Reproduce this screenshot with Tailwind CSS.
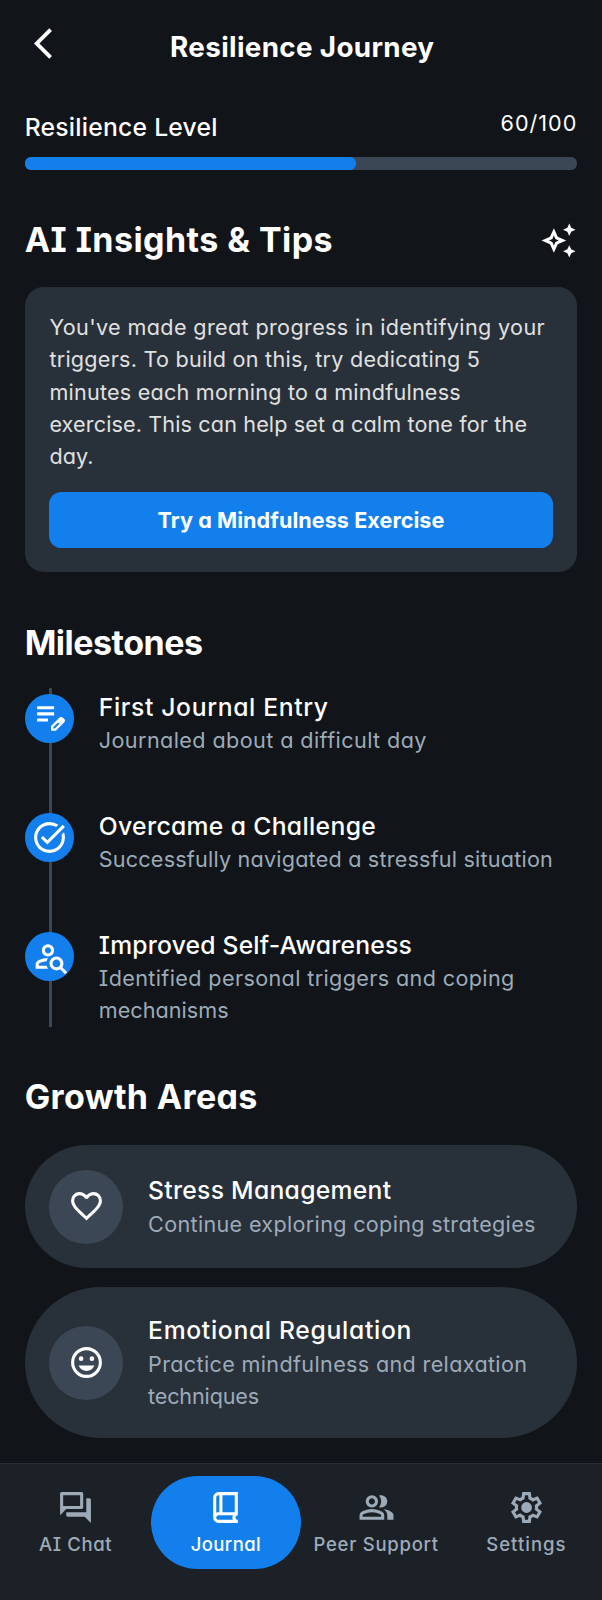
<!DOCTYPE html>
<html lang="en">
<head>
<meta charset="utf-8">
<meta name="viewport" content="width=device-width, initial-scale=1">
<title>Resilience Journey</title>
<script src="https://cdn.jsdelivr.net/npm/@tailwindcss/browser@4"></script>
</head>
<body class="bg-[#111418]">
<div class="flex h-[1600px] w-[602px] flex-col overflow-hidden bg-[#111418] font-['Inter',sans-serif] text-white [font-feature-settings:'cv11','cv08']">

  <header class="flex h-[109px] items-start pr-[25px] pl-[33.5px]">
    <svg class="mt-[24.5px] size-[37px] shrink-0" viewBox="0 0 24 24" fill="currentColor"><path d="M11.67 3.87 9.9 2.1 0 12l9.9 9.9 1.77-1.77L3.54 12z"/></svg>
    <h1 class="mt-[30px] flex-1 pr-[43px] text-center text-[27.8px] leading-[35px] font-bold tracking-[0.34px]">Resilience Journey</h1>
  </header>

  <main class="flex flex-col px-[24.7px]">
    <section>
      <div class="flex h-12 items-start justify-between">
        <p class="text-[24.7px] leading-[37px] font-medium tracking-[0.24px]">Resilience Level</p>
        <p class="-mt-0.5 text-[21.6px] leading-8 tracking-[1px]">60/100</p>
      </div>
      <div class="h-[13px] rounded-[6px] bg-[#3b4754]"><div class="h-full w-3/5 rounded-[6px] bg-[#137fec]"></div></div>
    </section>

    <section class="mt-[49px]">
      <div class="flex items-center justify-between">
        <h2 class="text-[34px] leading-[42px] font-bold tracking-[0.44px]">AI Insights &amp; Tips</h2>
        <svg class="size-[37px]" viewBox="0 0 24 24" fill="currentColor"><path d="m19 9 1.25-2.75L23 5l-2.75-1.25L19 1l-1.25 2.75L15 5l2.75 1.25zm0 6-1.25 2.75L15 19l2.75 1.25L19 23l1.25-2.75L23 19l-2.75-1.25zm-7.5-5.5L9 4 6.5 9.5 1 12l5.5 2.5L9 20l2.5-5.5L17 12zm-1.51 3.49L9 15.17l-.99-2.18L5.83 12l2.18-.99L9 8.83l.99 2.18 2.18.99z"/></svg>
      </div>
      <div class="mt-[26px] h-[285px] rounded-[18.5px] bg-[#283039] px-[24.7px] pt-[23.8px]">
        <p class="text-[21.6px] leading-[32.4px] whitespace-nowrap text-[#e0e0e0]">
          <span class="tracking-[0.36px]">You've made great progress in identifying your</span><br>
          <span class="tracking-[0.24px]">triggers. To build on this, try dedicating 5</span><br>
          <span class="tracking-[0.22px]">minutes each morning to a mindfulness</span><br>
          <span class="tracking-[0.13px]">exercise. This can help set a calm tone for the</span><br>
          <span class="tracking-[0.1px]">day.</span>
        </p>
        <button class="mt-[19.2px] flex h-14 w-full items-center justify-center rounded-[12.3px] bg-[#137fec] pb-px text-[21.6px] leading-8 font-bold tracking-[0.05px]">Try a Mindfulness Exercise</button>
      </div>
    </section>

    <section class="mt-[50px]">
      <h2 class="text-[34px] leading-[42px] font-bold tracking-[-0.5px]">Milestones</h2>
      <div class="relative mt-6 h-[339px]">
        <div class="absolute top-0 left-[24.7px] h-full w-[3px] bg-[#3b4754]"></div>
        <div class="relative flex h-[119px] gap-[24.7px]">
          <div class="mt-1.5 flex size-[49.4px] shrink-0 items-center justify-center rounded-full bg-[#137fec]">
            <svg class="size-[37px]" viewBox="0 -960 960 960" fill="currentColor"><path d="M160-400v-80h280v80H160Zm0-160v-80h440v80H160Zm0-160v-80h440v80H160Zm360 560v-123l221-220q9-9 20-13t22-4q12 0 23 4.5t20 13.5l37 37q8 9 12.5 20t4.5 22q0 11-4 22.5T863-380L643-160H520Zm300-263-37-37 37 37ZM580-220h38l121-122-18-19-19-18-122 121v38Zm141-141-19-18 37 37-18-19Z"/></svg>
          </div>
          <div class="mt-[0.5px] whitespace-nowrap">
            <h3 class="text-[24.7px] leading-9 font-medium tracking-[0.65px]">First Journal Entry</h3>
            <p class="-mt-[0.5px] text-[21.6px] leading-[32.4px] tracking-[0.41px] text-[#9dabb9]">Journaled about a difficult day</p>
          </div>
        </div>
        <div class="relative flex h-[119px] gap-[24.7px]">
          <div class="mt-1.5 flex size-[49.4px] shrink-0 items-center justify-center rounded-full bg-[#137fec]">
            <svg class="size-[37px]" viewBox="0 0 24 24" fill="currentColor"><path d="M22 5.18 10.59 16.6l-4.24-4.24 1.41-1.41 2.83 2.83 10-10zm-2.21 5.04c.13.57.21 1.17.21 1.78 0 4.42-3.58 8-8 8s-8-3.58-8-8 3.58-8 8-8c1.58 0 3.04.46 4.28 1.25l1.44-1.44A9.9 9.9 0 0 0 12 2C6.48 2 2 6.48 2 12s4.48 10 10 10 10-4.48 10-10c0-1.19-.22-2.33-.6-3.39z"/></svg>
          </div>
          <div class="mt-[0.5px] whitespace-nowrap">
            <h3 class="text-[24.7px] leading-9 font-medium tracking-[0.35px]">Overcame a Challenge</h3>
            <p class="-mt-[0.5px] text-[21.6px] leading-[32.4px] tracking-[0.2px] text-[#9dabb9]">Successfully navigated a stressful situation</p>
          </div>
        </div>
        <div class="relative flex gap-[24.7px]">
          <div class="mt-1.5 flex size-[49.4px] shrink-0 items-center justify-center rounded-full bg-[#137fec]">
            <svg class="size-[37px]" viewBox="0 -960 960 960" fill="currentColor"><path d="M440-480q-66 0-113-47t-47-113q0-66 47-113t113-47q66 0 113 47t47 113q0 66-47 113t-113 47Zm0-80q33 0 56.5-23.5T520-640q0-33-23.5-56.5T440-720q-33 0-56.5 23.5T360-640q0 33 23.5 56.5T440-560ZM884-20 756-148q-21 12-45 20t-51 8q-75 0-127.5-52.5T480-300q0-75 52.5-127.5T660-480q75 0 127.5 52.5T840-300q0 27-8 51t-20 45L940-76l-56 56ZM660-200q42 0 71-29t29-71q0-42-29-71t-71-29q-42 0-71 29t-29 71q0 42 29 71t71 29Zm-540 40v-111q0-34 17-63t47-44q51-26 115-44t142-18q-12 18-20.5 38.5T407-359q-60 5-107 20.5T221-306q-10 5-15.5 14.5T200-271v31h207q5 22 13.5 42t20.5 38H120Z"/></svg>
          </div>
          <div class="mt-[0.5px] whitespace-nowrap">
            <h3 class="text-[24.7px] leading-9 font-medium tracking-[0.2px]">Improved Self-Awareness</h3>
            <p class="-mt-[0.5px] text-[21.6px] leading-[32.4px] text-[#9dabb9]"><span class="tracking-[0.37px]">Identified personal triggers and coping</span><br><span class="tracking-[0.04px]">mechanisms</span></p>
          </div>
        </div>
      </div>
    </section>

    <section class="mt-[49px]">
      <h2 class="text-[34px] leading-[42px] font-bold tracking-[0.36px]">Growth Areas</h2>
      <div class="mt-[27px] flex flex-col gap-[19px] whitespace-nowrap">
        <div class="flex h-[123px] items-center gap-[24.7px] rounded-full bg-[#283039] px-[24.7px]">
          <div class="flex size-[74px] shrink-0 items-center justify-center rounded-full bg-[#3b4754]">
            <svg class="size-[37px]" viewBox="0 -960 960 960" fill="currentColor"><path d="m480-120-58-52q-101-91-167-157T150-447.5Q111-500 95.5-544T80-634q0-94 63-157t157-63q52 0 99 22t81 62q34-40 81-62t99-22q94 0 157 63t63 157q0 46-15.5 90T810-447.5Q771-395 705-329T538-172l-58 52Zm0-108q96-86 158-147.5t98-107q36-45.5 50-81t14-70.5q0-60-40-100t-100-40q-47 0-87 26.5T518-680h-76q-15-41-55-67.5T300-774q-60 0-100 40t-40 100q0 35 14 70.5t50 81q36 45.5 98 107T480-228Z"/></svg>
          </div>
          <div class="pb-[0.5px]">
            <h3 class="text-[24.7px] leading-9 font-medium tracking-[0.28px]">Stress Management</h3>
            <p class="-mt-[0.5px] text-[21.6px] leading-[32.4px] tracking-[0.32px] text-[#9dabb9]">Continue exploring coping strategies</p>
          </div>
        </div>
        <div class="flex h-[151px] items-center gap-[24.7px] rounded-full bg-[#283039] px-[24.7px]">
          <div class="flex size-[74px] shrink-0 items-center justify-center rounded-full bg-[#3b4754]">
            <svg class="size-[37px]" viewBox="0 -960 960 960"><circle cx="480" cy="-480" r="360" fill="none" stroke="currentColor" stroke-width="80"/><circle cx="340" cy="-580" r="60" fill="currentColor"/><circle cx="620" cy="-580" r="60" fill="currentColor"/><path fill="currentColor" d="M480-260q68 0 123.5-38.5T684-400H276q25 63 80.5 101.5T480-260Z"/></svg>
          </div>
          <div>
            <h3 class="text-[24.7px] leading-9 font-medium tracking-[0.68px]">Emotional Regulation</h3>
            <p class="-mt-[0.5px] text-[21.6px] leading-[32.4px] text-[#9dabb9]"><span class="tracking-[0.34px]">Practice mindfulness and relaxation</span><br><span class="tracking-[-0.16px]">techniques</span></p>
          </div>
        </div>
      </div>
    </section>
  </main>

  <nav class="mt-[25px] grid flex-1 grid-cols-4 items-start border-t border-[#283039] bg-[#1c2127] px-[0.5px] pt-3 text-[18.5px] leading-6 font-medium whitespace-nowrap text-[#9dabb9]">
    <a class="flex h-[93px] flex-col items-center gap-1.5 pt-[12.5px]">
      <svg class="size-[37px]" viewBox="0 -960 960 960" fill="currentColor"><path d="M280-240q-17 0-28.5-11.5T240-280v-80h520v-360h80q17 0 28.5 11.5T880-680v600L720-240H280ZM80-280v-560q0-17 11.5-28.5T120-880h520q17 0 28.5 11.5T680-840v360q0 17-11.5 28.5T640-440H240L80-280Zm520-240v-280H160v280h440Z"/></svg>
      <span class="tracking-[0.6px]">AI Chat</span>
    </a>
    <a class="flex h-[93px] flex-col items-center gap-1.5 rounded-full bg-[#137fec] pt-[12.5px] text-white">
      <svg class="size-[37px]" viewBox="0 -960 960 960" fill="currentColor"><path d="M300-80q-58 0-99-41t-41-99v-520q0-58 41-99t99-41h500v600q-25 0-42.5 17.5T740-220q0 25 17.5 42.5T800-160v80H300Zm-60-267q14-7 29-10t31-3h20v-440h-20q-25 0-42.5 17.5T240-740v393Zm160-13h320v-440H400v440Zm-100 200h373q-6-14-9.5-28.5T660-220q0-16 3-31t10-29H300q-26 0-43 17.5T240-220q0 26 17 43t43 17Z"/></svg>
      <span class="tracking-[0.42px]">Journal</span>
    </a>
    <a class="flex h-[93px] flex-col items-center gap-1.5 pt-[12.5px]">
      <svg class="size-[37px]" viewBox="0 -960 960 960" fill="currentColor"><path d="M40-160v-112q0-34 17.5-62.5T104-378q62-31 126-46.5T360-440q66 0 130 15.5T616-378q29 15 46.5 43.5T680-272v112H40Zm720 0v-120q0-44-24.5-84.5T666-434q51 6 96 20.5t84 35.5q36 20 55 44.5t19 53.5v120H760ZM360-480q-66 0-113-47t-47-113q0-66 47-113t113-47q66 0 113 47t47 113q0 66-47 113t-113 47Zm400-160q0 66-47 113t-113 47q-11 0-28-2.5t-28-5.5q27-32 41.5-71t14.5-81q0-42-14.5-81T544-792q14-5 28-6.5t28-1.5q66 0 113 47t47 113ZM120-240h480v-32q0-11-5.5-20T580-306q-54-27-109-40.5T360-360q-56 0-111 13.5T140-306q-9 5-14.5 14t-5.5 20v32Zm240-320q33 0 56.5-23.5T440-640q0-33-23.5-56.5T360-720q-33 0-56.5 23.5T280-640q0 33 23.5 56.5T360-560Z"/></svg>
      <span class="tracking-[0.75px]">Peer Support</span>
    </a>
    <a class="flex h-[93px] flex-col items-center gap-1.5 pt-[12.5px]">
      <svg class="size-[37px]" viewBox="0 -960 960 960" fill="currentColor"><path d="m370-80-16-128q-13-5-24.5-12T307-235l-119 50L78-375l103-78q-1-7-1-13.5v-27q0-6.5 1-13.5L78-585l110-190 119 50q11-8 23-15t24-12l16-128h220l16 128q13 5 24.5 12t22.5 15l119-50 110 190-103 78q1 7 1 13.5v27q0 6.5-2 13.5l103 78-110 190-118-50q-11 8-23 15t-24 12L590-80H370Zm70-80h79l14-106q31-8 57.5-23.5T639-327l99 41 39-68-86-65q5-14 7-29.5t2-31.5q0-16-2-31.5t-7-29.5l86-65-39-68-99 42q-22-23-48.5-38.5T533-694l-13-106h-79l-14 106q-31 8-57.5 23.5T321-633l-99-41-39 68 86 64q-5 15-7 30t-2 32q0 16 2 31t7 30l-86 65 39 68 99-42q22 23 48.5 38.5T427-266l13 106Zm42-180q58 0 99-41t41-99q0-58-41-99t-99-41q-59 0-99.5 41T342-480q0 58 40.5 99t99.5 41Z"/></svg>
      <span class="tracking-[1.04px]">Settings</span>
    </a>
  </nav>
</div>
</body>
</html>
